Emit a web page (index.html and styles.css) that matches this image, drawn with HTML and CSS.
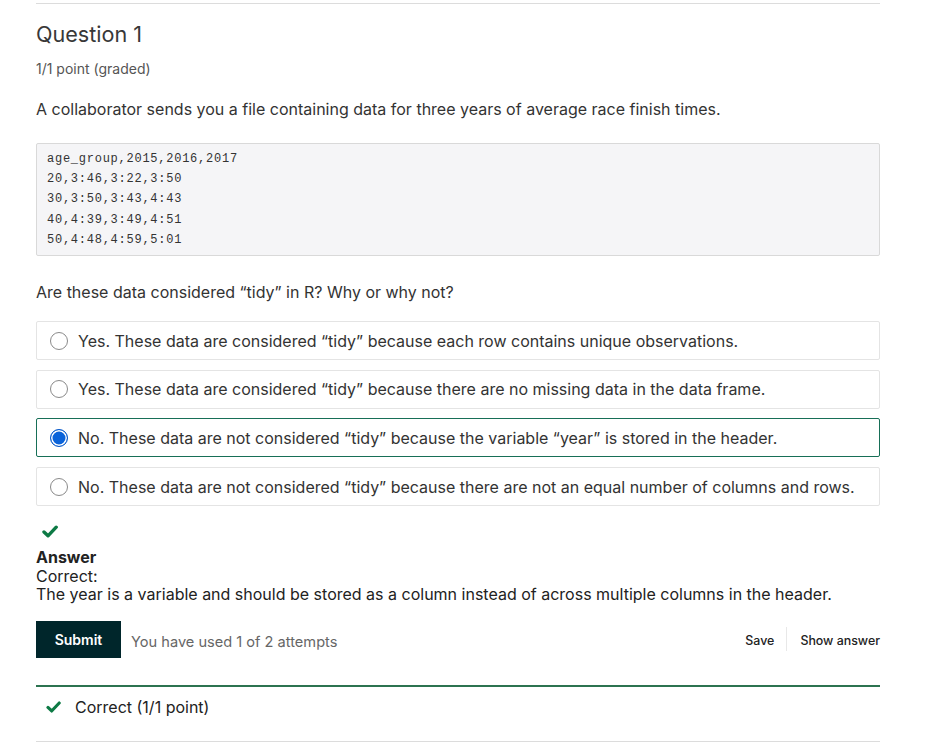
FILE: index.html
```html
<!DOCTYPE html>
<html>
<head>
<meta charset="utf-8">
<link rel="stylesheet" href="styles.css">
</head>
<body>
<div class="wrap">
  <div class="problem">
    <h2 class="title">Question 1</h2>
    <div class="points">1/1 point (graded)</div>
    <p class="prompt">A collaborator sends you a file containing data for three years of average race finish times.</p>
    <pre class="code">age_group,2015,2016,2017
20,3:46,3:22,3:50
30,3:50,3:43,4:43
40,4:39,3:49,4:51
50,4:48,4:59,5:01</pre>
    <p class="prompt q">Are these data considered “tidy” in R? Why or why not?</p>
    <div class="options">
      <label class="opt"><span class="radio"></span><span>Yes. These data are considered “tidy” because each row contains unique observations.</span></label>
      <label class="opt"><span class="radio"></span><span>Yes. These data are considered “tidy” because there are no missing data in the data frame.</span></label>
      <label class="opt sel"><span class="radio on"></span><span>No. These data are not considered “tidy” because the variable “year” is stored in the header.</span></label>
      <label class="opt"><span class="radio"></span><span>No. These data are not considered “tidy” because there are not an equal number of columns and rows.</span></label>
    </div>
    <div class="mark"><svg width="16" height="13" viewBox="0 0 16 13"><path d="M2 7 L6 10.8 L14.2 2.2" fill="none" stroke="#0d7a45" stroke-width="3.4" stroke-linecap="round" stroke-linejoin="round"/></svg></div>
    <div class="answer">
      <div class="ans-h">Answer</div>
      <div>Correct:</div>
      <div>The year is a variable and should be stored as a column instead of across multiple columns in the header.</div>
    </div>
    <div class="actions">
      <button class="submit">Submit</button>
      <span class="attempts">You have used 1 of 2 attempts</span>
      <span class="spacer"></span>
      <span class="link">Save</span>
      <span class="sep"></span>
      <span class="link">Show answer</span>
    </div>
    <div class="notice">
      <svg width="15" height="12" viewBox="0 0 16 13"><path d="M2 7 L6 10.8 L14.2 2.2" fill="none" stroke="#0d7a45" stroke-width="3.4" stroke-linecap="round" stroke-linejoin="round"/></svg>
      <span>Correct (1/1 point)</span>
    </div>
  </div>
</div>
</body>
</html>
```

FILE: styles.css
```css
html, body {
  margin: 0;
  padding: 0;
  background: #fff;
}
body {
  font-family: Inter, "Noto Sans", sans-serif;
  color: #313131;
}
.wrap {
  padding: 3px 55px 0 36px;
}
.problem {
  border-top: 1px solid #dcdcdc;
  width: 844px;
}
.title {
  margin: 15px 0 0;
  font-size: 21.6px;
  font-weight: 400;
  line-height: 30px;
  color: #383838;
}
.points {
  margin-top: 11px;
  font-size: 14px;
  line-height: 18px;
  color: #555;
}
.prompt {
  margin: 20px 0 0;
  font-size: 16px;
  line-height: 22px;
  color: #333;
}
.code {
  margin: 23px 0 0;
  padding: 5px 10px 5px;
  background: #f5f5f7;
  border: 1px solid #d9d9d9;
  border-radius: 2px;
  font-family: "Liberation Mono", "Courier New", monospace;
  font-size: 12px;
  line-height: 20.2px;
  color: #333;
  letter-spacing: 0.75px;
}
.q {
  margin-top: 25px;
}
.options {
  margin-top: 18px;
  display: flex;
  flex-direction: column;
  gap: 9.7px;
}
.opt {
  display: flex;
  align-items: center;
  gap: 10px;
  height: 37px;
  padding: 0 13px;
  border: 1px solid #e4e4e4;
  border-radius: 2px;
  font-size: 16px;
  color: #333;
}
.opt.sel {
  border-color: #176f57;
}
.radio {
  width: 18px;
  height: 18px;
  box-sizing: border-box;
  border: 1px solid #8a8a8a;
  border-radius: 50%;
  flex: none;
  background: #fff;
}
.radio.on {
  border: 1px solid #0a5ac9;
  background: #0b63d9;
  box-shadow: inset 0 0 0 1.5px #fff;
}
.mark {
  margin-top: 16px;
  padding-left: 6px;
  height: 13px;
}
.answer {
  margin-top: 13px;
  font-size: 16px;
  line-height: 18.5px;
  color: #222;
}
.ans-h {
  font-weight: 700;
}
.actions {
  margin-top: 17px;
  display: flex;
  align-items: center;
}
.submit {
  width: 85px;
  height: 37px;
  border: none;
  border-radius: 0;
  background: #00262b;
  color: #fff;
  font-family: Inter, "Noto Sans", sans-serif;
  font-weight: 600;
  font-size: 14px;
  padding: 0;
}
.attempts {
  margin-left: 10px;
  margin-top: 6px;
  font-size: 14.6px;
  color: #666;
}
.spacer {
  flex: 1;
}
.link {
  font-size: 12.4px;
  color: #222;
  font-weight: 500;
  margin-top: 2px;
}
.sep {
  width: 1px;
  height: 24px;
  background: #e8e8e8;
  margin: 0 13px 0 12px;
}
.notice {
  margin-top: 27px;
  border-top: 2px solid #2c7350;
  border-bottom: 1px solid #dcdcdc;
  height: 57px;
  display: flex;
  align-items: center;
  padding-left: 10px;
  gap: 14px;
  font-size: 16px;
  color: #222;
  padding-bottom: 13px;
  box-sizing: border-box;
}
```
